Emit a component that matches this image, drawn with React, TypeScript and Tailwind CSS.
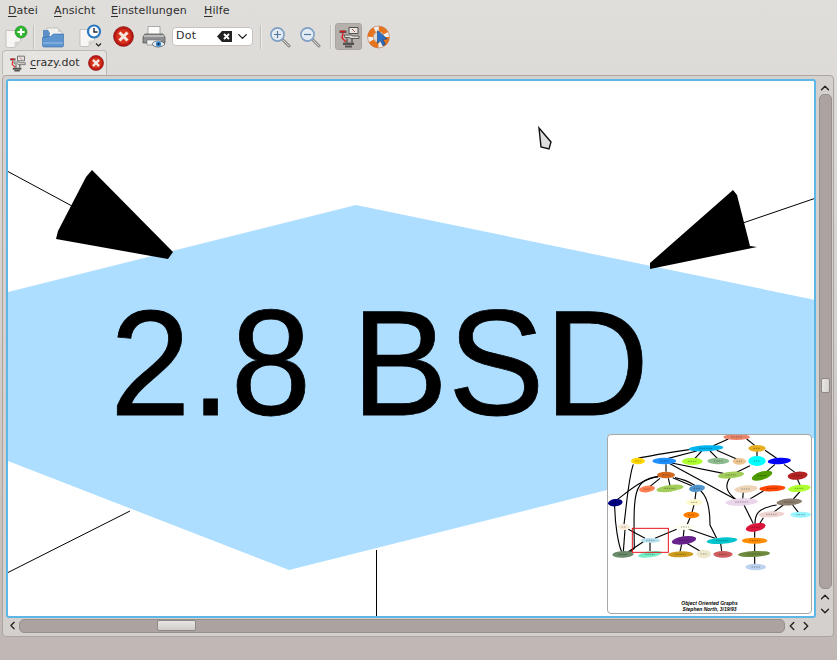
import { ChevronDown, ChevronLeft, ChevronRight, ChevronUp } from 'lucide-react';

// Overview graph, coordinates are 3x page px from (600, 425)
const NODES: [number, number, number, number, string, number?][] = [
  [410, 36, 80, 18, '#e9856a'],
  [471, 70, 52, 20, '#e8b020'],
  [318, 70, 104, 18, '#00b4f0', -3],
  [114, 108, 42, 20, '#ffd700'],
  [193, 108, 72, 20, '#1e90ff'],
  [277, 109, 62, 22, '#adff2f'],
  [355, 108, 66, 20, '#8fbc8f'],
  [418, 109, 40, 20, '#eec591'],
  [471, 108, 52, 30, '#00ffff'],
  [538, 108, 70, 19, '#0000ff', -4],
  [198, 150, 54, 20, '#d2691e'],
  [393, 150, 78, 20, '#a2cd5a', -5],
  [486, 152, 64, 24, '#4c9900', -18],
  [593, 152, 60, 24, '#b22222', -6],
  [141, 192, 48, 20, '#ff7f50', -8],
  [210, 190, 82, 20, '#a2cd5a', -8],
  [291, 190, 48, 21, '#4f94cd', -6],
  [438, 192, 70, 22, '#eed5b7', -5],
  [517, 190, 78, 18, '#ff4500', -3],
  [598, 190, 68, 21, '#adff2f', -6],
  [46, 233, 44, 22, '#000080', -6],
  [283, 232, 50, 18, '#fffacd'],
  [425, 231, 96, 22, '#ead5ea', -3],
  [568, 231, 76, 21, '#8b7d6b', -4],
  [274, 270, 48, 20, '#ff7f00'],
  [514, 268, 78, 18, '#eed5d2', -3],
  [602, 269, 62, 18, '#98f5ff'],
  [72, 306, 36, 18, '#faebd7'],
  [255, 306, 60, 16, '#fffff0'],
  [467, 307, 60, 24, '#dc143c', -12],
  [151, 346, 60, 14, '#b2dfee'],
  [252, 346, 74, 24, '#68228b', -8],
  [366, 347, 92, 19, '#00c5cd', -4],
  [464, 347, 76, 18, '#ff8c00'],
  [69, 388, 64, 20, '#698b69', -2],
  [150, 388, 72, 18, '#76eec6', -8],
  [242, 388, 76, 18, '#cd9b1d', -2],
  [311, 387, 44, 26, '#eee8cd'],
  [369, 388, 58, 20, '#cd5c5c'],
  [462, 387, 96, 18, '#6e8b3d', -3],
  [467, 426, 62, 20, '#bcd2ee'],
];

const EDGES = [
  'M268 74C200 84 150 92 114 100',
  'M290 78L205 100',
  'M305 78L285 100',
  'M330 78L352 100',
  'M350 76L410 102',
  'M385 42L340 62',
  'M440 42L465 62',
  'M471 78L471 95',
  'M495 76L530 100',
  'M100 118C85 160 80 240 72 298',
  'M198 118L198 140',
  'M215 114L370 145',
  'M210 116L410 225',
  'M450 122L410 142',
  'M525 118L500 140',
  'M552 118L585 142',
  'M180 160L150 184',
  'M205 160L210 182',
  'M218 158L275 182',
  'M175 155C130 160 90 195 50 225',
  'M175 155C100 165 100 200 103 370L90 382',
  'M225 158C330 180 330 250 330 300L350 340',
  'M390 158C375 180 375 200 410 225',
  'M430 200L428 222',
  'M490 198L450 222',
  'M592 162L600 180',
  'M600 200L580 222',
  'M550 240L520 262',
  'M578 240L595 262',
  'M530 240C470 250 465 270 465 296',
  'M490 278L478 298',
  'M432 240L460 296',
  'M464 316L464 338',
  'M464 355L464 378',
  'M464 395L464 418',
  'M288 200L285 224',
  'M282 240L276 262',
  'M270 278L262 298',
  'M230 313L165 340',
  'M252 314L250 335',
  'M265 312L345 340',
  'M85 313L135 340',
  'M130 350L85 380',
  'M150 352L150 378',
  'M44 243C45 300 55 360 65 380',
  'M75 314L70 380',
  'M245 358L240 380',
  'M260 355L300 378',
  'M362 356L365 378',
];

function Menu({ first, rest, className }: { first: string; rest: string; className: string }) {
  return (
    <span className={className}>
      <span className="underline underline-offset-2">{first}</span>
      {rest}
    </span>
  );
}

function DocShape() {
  return (
    <path
      d="M2 5.5h14.5v11l-6 6H3.5a1.5 1.5 0 0 1-1.5-1.5z"
      fill="#f7f6f4"
      stroke="#b4b0aa"
      strokeWidth="0.7"
    />
  );
}

function NewIcon() {
  return (
    <svg width="24" height="24" viewBox="0 0 24 24" className="shrink-0">
      <DocShape />
      <path d="M16.5 16.5h-4.5a1.5 1.5 0 0 0-1.5 1.5v4.5z" fill="#d6d4d0" />
      <circle cx="17" cy="7" r="6" fill="#2fb52f" stroke="#178a17" strokeWidth="0.6" />
      <path d="M17 3.4v7.2M13.4 7h7.2" stroke="#fff" strokeWidth="2.2" />
    </svg>
  );
}

function FolderIcon() {
  return (
    <svg width="24" height="24" viewBox="0 0 24 24" className="shrink-0">
      <path d="M6 3h11l4 4v8H6z" fill="#f3f2f0" stroke="#a9a7a3" strokeWidth="0.6" />
      <path d="M17 3v4h4z" fill="#d0cecb" />
      <path d="M2 5h5l2 3-1 6H2z" fill="#5b8fc6" />
      <path d="M1.5 12.5l8-1 3-2.5H22.5v11.5a1.5 1.5 0 0 1-1.5 1.5H3a1.5 1.5 0 0 1-1.5-1.5z" fill="#5f95cf" stroke="#2f69a6" strokeWidth="0.6" />
      <path d="M2 18h20" stroke="#9cc2e8" strokeWidth="1" />
    </svg>
  );
}

function RecentIcon() {
  return (
    <svg width="26" height="26" viewBox="0 0 26 26" className="shrink-0">
      <DocShape />
      <path d="M16.5 16.5h-4.5a1.5 1.5 0 0 0-1.5 1.5v4.5z" fill="#d6d4d0" />
      <circle cx="16" cy="7.5" r="6" fill="#fff" stroke="#2a78c0" strokeWidth="2.2" />
      <path d="M16 4v4h3.5" fill="none" stroke="#24272b" strokeWidth="1.4" />
      <path d="M18 19.5l2.5 2.5 2.5-2.5" fill="none" stroke="#222" strokeWidth="1.2" />
    </svg>
  );
}

function CloseIcon({ size }: { size: number }) {
  return (
    <svg width={size} height={size} viewBox="0 0 20 20" className="shrink-0">
      <circle cx="10" cy="10" r="9.4" fill="#bb1a14" stroke="#8b1410" strokeWidth="0.8" />
      <circle cx="10" cy="10" r="7" fill="#d8331f" />
      <path d="M6.2 6.2l7.6 7.6M13.8 6.2l-7.6 7.6" stroke="#f6e7df" strokeWidth="3" />
    </svg>
  );
}

function PrintIcon() {
  return (
    <svg width="24" height="24" viewBox="0 0 24 24" className="shrink-0">
      <path d="M6 1.5h12v8H6z" fill="#fbfbfa" stroke="#8d8d8b" strokeWidth="0.7" />
      <path d="M3 9h18l2 3v6H1v-6z" fill="#8d8f90" stroke="#4a4a4a" strokeWidth="0.7" />
      <path d="M2 11h20" stroke="#d7d7d5" strokeWidth="1.2" />
      <path d="M5 15h14v5H5z" fill="#f2f2f0" stroke="#666" strokeWidth="0.5" />
      <path d="M10 19c2-4 10-4 13 0-3 4-11 4-13 0z" fill="#e8eef4" stroke="#3a4a5a" strokeWidth="0.7" />
      <circle cx="16.5" cy="19" r="2.6" fill="#2a7fc6" />
      <circle cx="16.5" cy="19" r="1" fill="#102030" />
    </svg>
  );
}

function ZoomIcon({ minus }: { minus?: boolean }) {
  return (
    <svg width="22" height="22" viewBox="0 0 22 22" className="shrink-0">
      <path d="M13 13l7 7" stroke="#8c8a88" strokeWidth="3" strokeLinecap="round" />
      <path d="M13 13l7 7" stroke="#dcdad8" strokeWidth="1" strokeLinecap="round" />
      <circle cx="8.5" cy="8.5" r="6.6" fill="#e3ebf3" stroke="#7f9fc4" strokeWidth="1.6" />
      <path d={minus ? 'M5 8.5h7' : 'M5 8.5h7M8.5 5v7'} stroke="#55779e" strokeWidth="1.2" />
    </svg>
  );
}

function GraphIcon({ size }: { size: number }) {
  return (
    <svg width={size} height={size} viewBox="0 0 22 22" className="shrink-0">
      <path d="M11 1.5h9v6h-9z" fill="#e9e5e2" stroke="#444" strokeWidth="0.9" />
      <path d="M14 3l3 3" stroke="#b03030" strokeWidth="0.8" />
      <path d="M1.5 4.5h7v2.5h-7z" fill="#555" />
      <path d="M2 5.5h5" stroke="#d81818" strokeWidth="1.6" />
      <path d="M5 7l-1 5 4 4" fill="none" stroke="#e01818" strokeWidth="1.3" />
      <path d="M6 9h7l2 1h6v2.5h-8l-2-1H7z" fill="#dedbd8" stroke="#444" strokeWidth="0.8" />
      <path d="M9 12.5v4M14 12.5v4" stroke="#444" strokeWidth="1.2" />
      <path d="M5 16.5h11v2.5H5zM7 19.5h7v2H7z" fill="#55524f" />
    </svg>
  );
}

function HelpIcon() {
  return (
    <svg width="24" height="24" viewBox="0 0 25 25" className="shrink-0">
      <circle cx="12" cy="12.5" r="8.5" fill="none" stroke="#f0eeea" strokeWidth="5.6" />
      <circle cx="12" cy="12.5" r="8.5" fill="none" stroke="#e8741e" strokeWidth="5.6" strokeDasharray="9 4.35" />
      <circle cx="12" cy="12.5" r="11.4" fill="none" stroke="#a8562a" strokeWidth="0.5" />
      <circle cx="12" cy="12.5" r="5.4" fill="#dcd9d6" stroke="#9d6a48" strokeWidth="0.5" />
      <path d="M11 6l10 8.5-4.5.5 2.5 5-2.5 1.5-2.5-5.5-3 3z" fill="#2b70c4" stroke="#16447e" strokeWidth="0.7" />
    </svg>
  );
}

function Sep() {
  return <div className="h-[24px] w-[2px] shrink-0 border-l border-[#c3bfbb] bg-[#eeecea]" />;
}

function Overview() {
  return (
    <div className="absolute left-[599px] top-[353px] h-[180px] w-[205px] overflow-hidden rounded-[4px] border border-[#aaa6a3] bg-white">
      <svg width="203" height="178" viewBox="24 30 609 534" className="block">
        {EDGES.map((d) => (
          <path key={d} d={d} fill="none" stroke="#000" strokeWidth="3.4" />
        ))}
        {NODES.map(([x, y, w, h, color, tilt]) => (
          <g key={`${x}-${y}`}>
            <ellipse
              cx={x}
              cy={y}
              rx={w / 2}
              ry={h / 2}
              fill={color}
              transform={tilt ? `rotate(${tilt} ${x} ${y})` : undefined}
            />
            <path d={`M${x - w / 5} ${y}h${(w * 2) / 5}`} stroke="#000" strokeOpacity="0.45" strokeWidth="2.5" strokeDasharray="4 3" />
          </g>
        ))}
        <rect x="97" y="310" width="108" height="72" fill="none" stroke="#e8141c" strokeWidth="3" />
      </svg>
      <div className="absolute left-0 right-[0px] top-[165px] text-center font-['Liberation_Sans',sans-serif] text-[5px] font-bold italic leading-[6px] text-black">
        Object Oriented Graphs
        <br />
        Stephen North, 3/19/93
      </div>
    </div>
  );
}

function GraphView() {
  return (
    <div className="relative h-[539px] w-[810px] shrink-0 overflow-hidden rounded-[3px] border-2 border-[#5db6e6] bg-white">
      {/* page coordinates, view starts at 8,81 */}
      <svg width="806" height="535" viewBox="8 81 806 535" className="absolute left-0 top-0">
        <path d="M0 294L356 205L830 303V434L289 570L0 458z" fill="#aedeff" />
        <path d="M7 171L72 206M737 225L816 198M7 573L130 511M376.5 550V617" stroke="#000" strokeWidth="1" fill="none" />
        <path d="M92 170L173 252L168 259L56 239L58 231L86 177z" fill="#000" />
        <path d="M733 190L737 195L750 246L757 247L650 269L650 263z" fill="#000" />
        <text
          x="110"
          y="415"
          textLength="539"
          lengthAdjust="spacingAndGlyphs"
          className="font-['Liberation_Sans',sans-serif]"
          fontSize="150"
          fill="#000"
          stroke="#000"
          strokeWidth="0.8"
        >
          2.8 BSD
        </text>
        <path d="M539 128L551 142L549 149L541 147z" fill="#dedede" stroke="#111" strokeWidth="1.4" />
      </svg>
      <Overview />
    </div>
  );
}

export default function App() {
  return (
    <div className="flex h-[660px] w-[837px] flex-col overflow-hidden bg-gradient-to-b from-[#e0dedb] via-[#d4d0cd] to-[#bfb7b3] font-['DejaVu_Sans',sans-serif] text-[11px] text-[#2e2e2e]">
      {/* Menu */}
      <div className="flex h-[22px] shrink-0 items-center pl-[8px] tracking-[0.1px]">
        <Menu first="D" rest="atei" className="w-[46px]" />
        <Menu first="A" rest="nsicht" className="w-[57px]" />
        <Menu first="E" rest="instellungen" className="w-[93px]" />
        <Menu first="H" rest="ilfe" className="" />
      </div>

      {/* Toolbar */}
      <div className="flex h-[29px] shrink-0 items-center pl-[4px]">
        <NewIcon />
        <div className="ml-[5px] mr-[6px]"><Sep /></div>
        <FolderIcon />
        <div className="ml-[13px]"><RecentIcon /></div>
        <div className="ml-[9px]"><CloseIcon size={21} /></div>
        <div className="ml-[8px]"><PrintIcon /></div>
        <div className="ml-[6px] flex h-[19px] w-[81px] shrink-0 items-center rounded-[4px] border border-[#c6c3bf] bg-white pl-[3px] pr-[2px]">
          <span className="flex-1 tracking-[0.3px]">Dot</span>
          <svg width="15" height="11" viewBox="0 0 15 11" className="shrink-0">
            <path d="M5 0h10v11H5L0 5.5z" fill="#222" />
            <path d="M7 3l5 5M12 3l-5 5" stroke="#fff" strokeWidth="1.8" />
          </svg>
          <ChevronDown size={15} strokeWidth={2.2} className="ml-[3px] shrink-0 text-[#222]" />
        </div>
        <div className="ml-[7px] mr-[7px]"><Sep /></div>
        <ZoomIcon />
        <div className="ml-[8px]"><ZoomIcon minus /></div>
        <div className="ml-[9px]"><Sep /></div>
        <div className="ml-[3px] flex h-[27px] w-[27px] shrink-0 items-center justify-center rounded-[3px] border border-[#aaa5a1] bg-[#b6b0ac]">
          <GraphIcon size={22} />
        </div>
        <div className="ml-[5px]"><HelpIcon /></div>
      </div>

      {/* Tabs */}
      <div className="flex h-[24px] shrink-0 items-end pl-[2px]">
        <div className="flex h-[25px] w-[105px] items-center gap-[4px] rounded-t-[4px] border border-b-0 border-[#bdb9b5] bg-[#e6e4e1] pl-[6px]">
          <GraphIcon size={17} />
          <span className="w-[54px]">
            <span className="underline underline-offset-2">c</span>razy.dot
          </span>
          <CloseIcon size={16} />
        </div>
      </div>

      {/* Main panel */}
      <div className="ml-[2px] flex h-[562px] w-[832px] shrink-0 flex-col rounded-[4px] border border-[#aaa5a1] bg-[#d4d0cd] pl-[3px] pt-[3px]">
        <div className="flex h-[539px] shrink-0">
          <GraphView />
          <div className="ml-[2px] flex w-[14px] shrink-0 flex-col items-center">
            <ChevronUp size={14} strokeWidth={2.4} className="mt-[2px] shrink-0 text-[#222]" />
            <div className="mt-[-1px] flex h-[495px] w-[13px] shrink-0 flex-col rounded-[5px] border border-[#96908c] bg-[#aca3a0] pt-[283px]">
              <div className="ml-[1px] h-[15px] w-[9px] rounded-[2px] border border-[#8f8985] bg-gradient-to-r from-[#e8e6e4] to-[#d6d3d0]" />
            </div>
            <ChevronUp size={14} strokeWidth={2.4} className="mt-[1px] shrink-0 text-[#222]" />
            <ChevronDown size={14} strokeWidth={2.4} className="shrink-0 text-[#222]" />
          </div>
        </div>
        <div className="flex h-[15px] shrink-0 items-center">
          <ChevronLeft size={13} strokeWidth={2.4} className="shrink-0 text-[#222]" />
          <div className="flex h-[14px] w-[766px] shrink-0 items-center rounded-[5px] border border-[#96908c] bg-[#aca3a0] pl-[137px]">
            <div className="h-[11px] w-[39px] rounded-[2px] border border-[#8f8985] bg-gradient-to-b from-[#e8e6e4] to-[#d0cdca]" />
          </div>
          <ChevronLeft size={14} strokeWidth={2.4} className="shrink-0 text-[#222]" />
          <ChevronRight size={14} strokeWidth={2.4} className="shrink-0 text-[#222]" />
        </div>
      </div>
    </div>
  );
}
